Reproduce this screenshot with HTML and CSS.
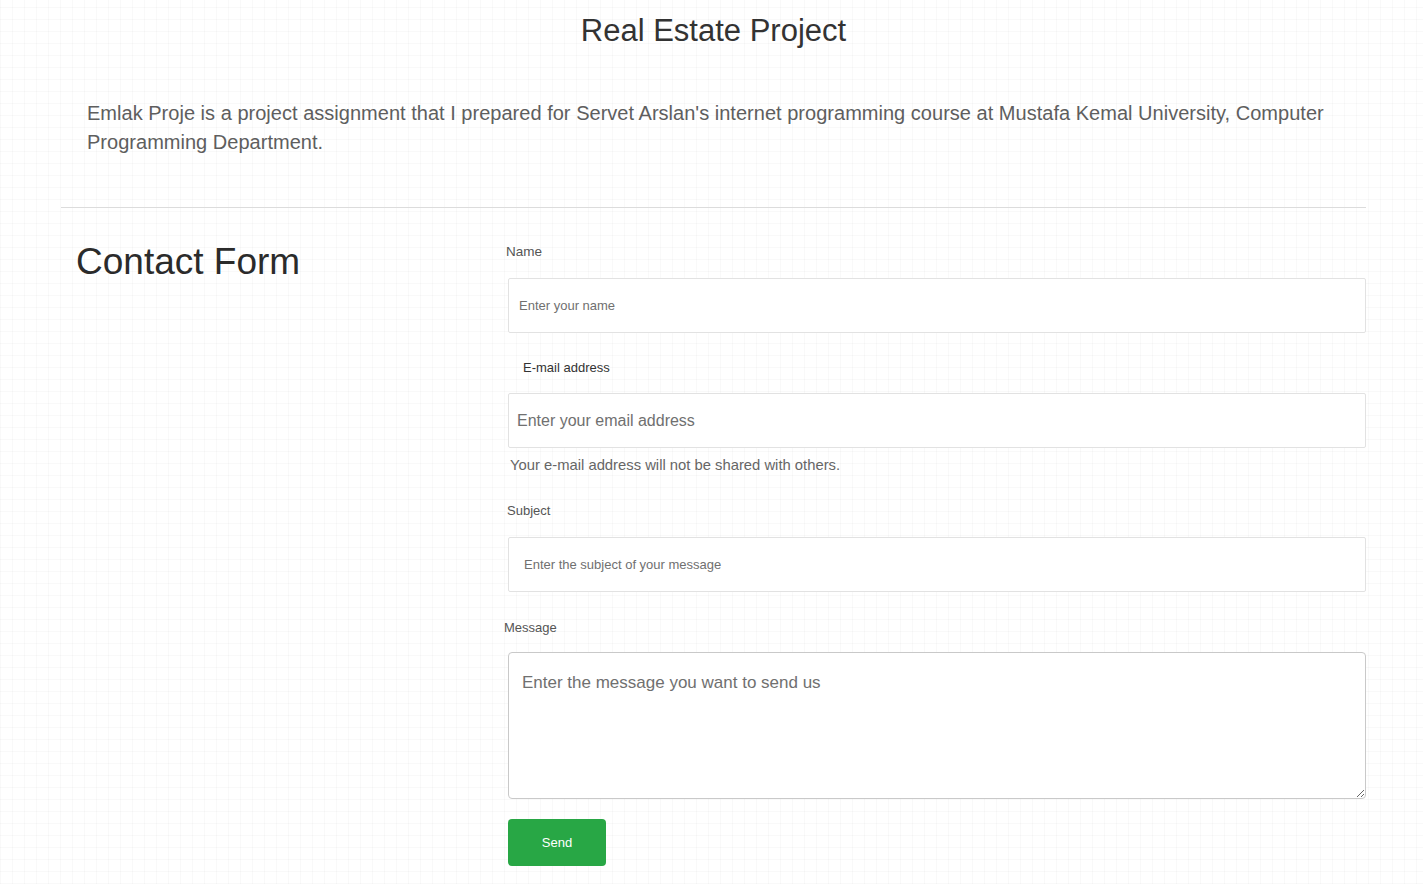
FILE: index.html
```html
<!DOCTYPE html>
<html lang="en">
<head>
<meta charset="utf-8">
<title>Real Estate Project</title>
<link rel="stylesheet" href="styles.css">
</head>
<body>
<div class="page">
  <h1 class="title">Real Estate Project</h1>
  <p class="intro">Emlak Proje is a project assignment that I prepared for Servet Arslan's internet programming course at Mustafa Kemal University, Computer Programming Department.</p>
  <hr class="rule">
  <div class="contact">
    <div class="contact-side">
      <h2 class="contact-title">Contact Form</h2>
    </div>
    <form class="contact-form">
      <label class="lbl lbl-name" for="name">Name</label>
      <input class="field field-name" id="name" type="text" placeholder="Enter your name">
      <label class="lbl lbl-email" for="email">E-mail address</label>
      <input class="field field-email" id="email" type="email" placeholder="Enter your email address">
      <small class="help">Your e-mail address will not be shared with others.</small>
      <label class="lbl lbl-subject" for="subject">Subject</label>
      <input class="field field-subject" id="subject" type="text" placeholder="Enter the subject of your message">
      <label class="lbl lbl-message" for="message">Message</label>
      <textarea class="area" id="message" placeholder="Enter the message you want to send us"></textarea>
      <button class="send" type="button">Send</button>
    </form>
  </div>
</div>
</body>
</html>
```

FILE: styles.css
```css
html, body {
  margin: 0;
  padding: 0;
}
body {
  font-family: "Liberation Sans", Arial, sans-serif;
  color: #333;
  background-color: #fff;
  background-image:
    repeating-linear-gradient(0deg, rgba(0,0,0,0.022) 0 1px, transparent 1px 12px),
    repeating-linear-gradient(90deg, rgba(0,0,0,0.022) 0 1px, transparent 1px 12px);
  min-height: 884px;
}
.page {
  width: 1305px;
  margin: 0 0 0 61px;
}
.title {
  margin: 12px 0 0;
  text-align: center;
  font-size: 31px;
  font-weight: 400;
  line-height: 37px;
  color: #333;
}
.intro {
  margin: 50px 0 0;
  padding: 0 0 0 26px;
  font-size: 20px;
  line-height: 29px;
  color: #5e5e5e;
  letter-spacing: 0.02px;
}
.rule {
  margin: 50px 0 0;
  border: 0;
  border-top: 1px solid #dcdcdc;
  height: 0;
}
.contact {
  display: flex;
}
.contact-side {
  width: 443px;
  flex: none;
}
.contact-title {
  margin: 32px 0 0 15px;
  font-size: 37px;
  font-weight: 400;
  line-height: 44px;
  color: #2b2b2b;
}
.contact-form {
  flex: 1;
  display: flex;
  flex-direction: column;
  align-items: flex-start;
  padding-top: 36px;
}
.lbl {
  display: block;
  font-size: 13px;
  line-height: 16px;
  color: #555;
}
.lbl-name { font-size: 13.5px; margin-left: 2px; }
.lbl-email { margin-left: 19px; margin-top: 27px; color: #333; }
.lbl-subject { margin-left: 3px; margin-top: 29px; }
.lbl-message { margin-left: 0; margin-top: 28px; }
.field {
  box-sizing: border-box;
  width: calc(100% - 4px);
  margin-left: 4px;
  height: 55px;
  border: 1px solid #e2e2e2;
  border-radius: 2px;
  background: #fff;
  font-family: "Liberation Sans", Arial, sans-serif;
  color: #333;
  outline: none;
}
.field::placeholder, .area::placeholder {
  color: #707070;
  opacity: 1;
}
.field-name { margin-top: 18px; font-size: 13px; padding: 0 10px; }
.field-email { margin-top: 17px; font-size: 16px; padding: 0 8px; }
.field-subject { margin-top: 18px; font-size: 13px; padding: 0 15px; }
.help {
  display: block;
  margin: 8px 0 0 6px;
  font-size: 14.8px;
  line-height: 18px;
  color: #666;
}
.area {
  box-sizing: border-box;
  width: calc(100% - 4px);
  margin: 16px 0 0 4px;
  height: 147px;
  border: 1px solid #c9c9c9;
  border-radius: 4px;
  padding: 20px 13px 18px;
  font-family: "Liberation Sans", Arial, sans-serif;
  font-size: 17px;
  line-height: 20px;
  color: #333;
  background: #fff;
  outline: none;
  resize: vertical;
}
.send {
  margin: 20px 0 0 4px;
  width: 98px;
  height: 47px;
  border: 0;
  border-radius: 4px;
  background: #28a745;
  color: #fff;
  font-family: "Liberation Sans", Arial, sans-serif;
  font-size: 13px;
  cursor: pointer;
}
```
